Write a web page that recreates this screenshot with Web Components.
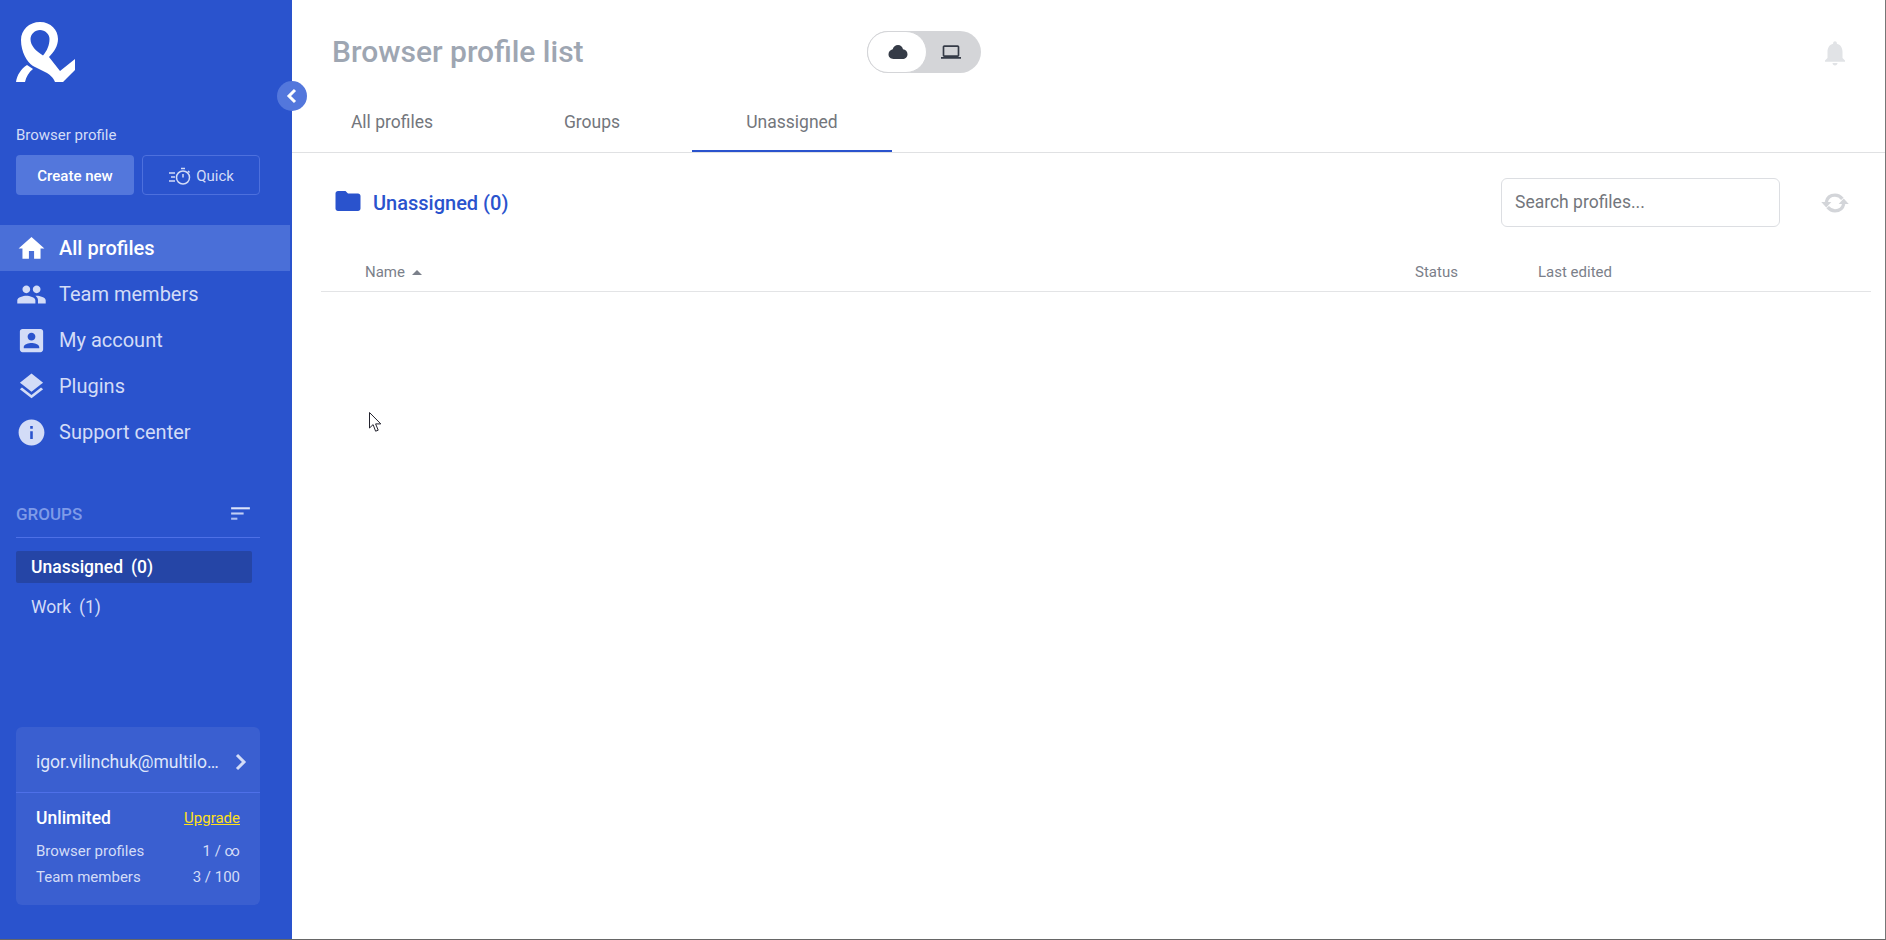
<!DOCTYPE html>
<html>
<head>
<meta charset="utf-8">
<title>Browser profile list</title>
<style>
  html, body { margin: 0; height: 100%; background: #fff; }
  body { font-family: Roboto, "Liberation Sans", sans-serif; overflow: hidden; }
</style>
</head>
<body>
<ml-app>
  <ml-sidebar slot="side">
    <ml-nav-item active label="All profiles" icon="home"></ml-nav-item>
    <ml-nav-item label="Team members" icon="people"></ml-nav-item>
    <ml-nav-item label="My account" icon="account"></ml-nav-item>
    <ml-nav-item label="Plugins" icon="layers"></ml-nav-item>
    <ml-nav-item label="Support center" icon="info"></ml-nav-item>
  </ml-sidebar>
  <ml-main slot="main"></ml-main>
</ml-app>

<script>
const ICONS = {
  home: "M10 20v-6h4v6h5v-8h3L12 3 2 12h3v8z",
  people: "M16 11c1.66 0 2.99-1.34 2.99-3S17.66 5 16 5c-1.66 0-3 1.34-3 3s1.34 3 3 3zm-8 0c1.66 0 2.99-1.34 2.99-3S9.66 5 8 5C6.34 5 5 6.34 5 8s1.34 3 3 3zm0 2c-2.33 0-7 1.17-7 3.5V19h14v-2.5c0-2.33-4.67-3.5-7-3.5zm8 0c-.29 0-.62.02-.97.05 1.16.84 1.97 1.97 1.97 3.45V19h6v-2.5c0-2.33-4.67-3.5-7-3.5z",
  account: "M3 5v14c0 1.1.89 2 2 2h14c1.1 0 2-.9 2-2V5c0-1.1-.9-2-2-2H5c-1.11 0-2 .9-2 2zm12 4c0 1.66-1.34 3-3 3s-3-1.34-3-3 1.34-3 3-3 3 1.34 3 3zm-9 8c0-2 4-3.1 6-3.1s6 1.1 6 3.1v1H6v-1z",
  layers: "M11.99 18.54l-7.37-5.73L3 14.07l9 7 9-7-1.63-1.27-7.38 5.74zM12 16l7.36-5.73L21 9l-9-7-9 7 1.63 1.27L12 16z",
  info: "M12 2C6.48 2 2 6.48 2 12s4.48 10 10 10 10-4.48 10-10S17.52 2 12 2zm1 15h-2v-6h2v6zm0-8h-2V7h2v2z"
};

class MlApp extends HTMLElement {
  constructor() {
    super();
    this.attachShadow({ mode: "open" });
    this.shadowRoot.innerHTML = `
      <style>
        :host {
          display: grid;
          grid-template-columns: 292px 1fr;
          height: 940px;
          box-sizing: border-box;
          border-right: 1px solid #777;
          border-bottom: 1px solid #666;
          position: relative;
        }
        .cursor { position: absolute; left: 369px; top: 412px; }
      </style>
      <slot name="side"></slot>
      <slot name="main"></slot>
      <svg class="cursor" width="14" height="21" viewBox="0 0 14 21">
        <path d="M.5.5v15.5l3.6-3.4 2.5 6.6 2.6-1-2.6-6.3h5.2z" fill="#fff" stroke="#23232e" stroke-width="1"/>
      </svg>
    `;
  }
}

class MlSidebar extends HTMLElement {
  constructor() {
    super();
    this.attachShadow({ mode: "open" });
    this.shadowRoot.innerHTML = `
      <style>
        :host {
          display: flex;
          flex-direction: column;
          background: #2a53cd;
          position: relative;
          height: 939px;
        }
        .logo { display: block; margin: 19px 0 0 13px; }
        .label { margin: 41px 0 0 16px; height: 18px; line-height: 18px; font-size: 15px; color: #d3dcf7; }
        .actions { display: flex; gap: 8px; margin: 11px 32px 0 16px; }
        .btn {
          width: 118px;
          height: 40px;
          box-sizing: border-box;
          border-radius: 4px;
          display: flex;
          align-items: center;
          justify-content: center;
          font-size: 15px;
        }
        .create { background: #5377dc; color: #fff; font-weight: 500; padding-top: 2px; }
        .quick { border: 1px solid #4d70dd; color: #d3dcf7; gap: 4px; padding-top: 1px; }
        nav { display: flex; flex-direction: column; margin-top: 30px; }
        .toggle {
          position: absolute;
          left: 277px;
          top: 81px;
          width: 30px;
          height: 30px;
          border-radius: 50%;
          background: #5377dc;
          display: flex;
          align-items: center;
          justify-content: center;
        }
        .groups-head {
          display: flex;
          align-items: center;
          justify-content: space-between;
          margin: 45px 32px 0 16px;
          height: 27px;
          padding: 0 7px 10px 0;
          border-bottom: 1px solid #4d70e6;
          font-size: 17px;
          font-weight: 500;
          color: #7f9be8;
        }
        .groups { display: flex; flex-direction: column; gap: 8px; margin: 13px 40px 0 16px; }
      </style>
      <svg class="logo" width="66" height="66" viewBox="13 19 66 66" fill="#fff">
        <path fill-rule="evenodd" d="M40 22C51 22 58 30 58 39C58 46 54 52 49 57L60 71L75 59V70L63 82H55C53 77 50 75 47 73L33 66C27 62 21 52 21 40C21 30 29 22 40 22ZM40 30C35 30 30.500 34 30.500 39C30.500 46 36 51 43 55.500C47 51 49.500 45 49.500 39C49.500 34 45 30 40 30Z"/>
        <path d="M16 82C17 75 21 69 27 65L33 69C29 72 26 77 25 82Z"/>
      </svg>
      <div class="label">Browser profile</div>
      <div class="actions">
        <div class="btn create">Create new</div>
        <div class="btn quick">
          <svg width="24" height="20" viewBox="0 0 24 20" fill="none" stroke="#d3dcf7" stroke-width="1.500">
            <circle cx="15" cy="11.500" r="6.500"/>
            <path d="M13 2.500h4M15 11.500V8M20 5l1.500 1.500M1 7h6M3 11h4M1 15h6"/>
          </svg>
          <span>Quick</span>
        </div>
      </div>
      <nav><slot></slot></nav>
      <div class="groups-head">
        <span>GROUPS</span>
        <svg width="25" height="25" viewBox="0 0 24 24">
          <rect x="3" y="6" width="18" height="2" fill="#dbe3fa"/>
          <rect x="3" y="11" width="12" height="2" fill="#c2cff5"/>
          <rect x="3" y="16" width="6" height="2" fill="#aebff2"/>
        </svg>
      </div>
      <div class="groups">
        <ml-group-item active name="Unassigned" count="(0)"></ml-group-item>
        <ml-group-item name="Work" count="(1)"></ml-group-item>
      </div>
      <ml-account-card></ml-account-card>
      <div class="toggle">
        <svg width="14" height="16" viewBox="0 0 14 16" fill="none" stroke="#fff" stroke-width="3">
          <path d="M10 2 4 8l6 6"/>
        </svg>
      </div>
    `;
  }
}

class MlNavItem extends HTMLElement {
  connectedCallback() {
    if (this.shadowRoot) return;
    this.attachShadow({ mode: "open" });
    const icon = ICONS[this.getAttribute("icon")];
    this.shadowRoot.innerHTML = `
      <style>
        :host {
          display: flex;
          align-items: center;
          height: 46px;
          margin-right: 2px;
          padding-left: 16px;
          gap: 12px;
          font-size: 20px;
          color: #d3dcf7;
          fill: #d3dcf7;
        }
        :host([active]) {
          background: #4a6fd8;
          color: #fff;
          fill: #fff;
          font-weight: 500;
        }
        svg { flex: none; }
      </style>
      <svg width="31" height="31" viewBox="0 0 24 24"><path d="${icon}"/></svg>
      <span>${this.getAttribute("label")}</span>
    `;
  }
}

class MlGroupItem extends HTMLElement {
  connectedCallback() {
    if (this.shadowRoot) return;
    this.attachShadow({ mode: "open" });
    this.shadowRoot.innerHTML = `
      <style>
        :host {
          display: flex;
          align-items: center;
          gap: 8px;
          height: 32px;
          padding-left: 15px;
          border-radius: 2px;
          font-size: 17.500px;
          color: #d3dcf7;
        }
        :host([active]) { background: #2545a6; color: #fff; font-weight: 500; }
      </style>
      <span>${this.getAttribute("name")}</span><span>${this.getAttribute("count")}</span>
    `;
  }
}

class MlAccountCard extends HTMLElement {
  constructor() {
    super();
    this.attachShadow({ mode: "open" });
    this.shadowRoot.innerHTML = `
      <style>
        :host {
          display: block;
          margin: auto 32px 34px 16px;
          background: #3a5fd0;
          border-radius: 6px;
          color: #d3dcf7;
        }
        .top {
          display: flex;
          align-items: center;
          justify-content: space-between;
          height: 66px;
          padding: 4px 13px 0 20px;
          box-sizing: border-box;
          border-bottom: 1px solid #4e70e8;
          font-size: 17.500px;
        }
        .mail { white-space: nowrap; color: #dfe6fb; }
        .bottom { padding: 13px 20px 15px 20px; }
        .plan { display: flex; align-items: center; justify-content: space-between; height: 24px; margin-bottom: 8px; }
        .name { font-size: 17.500px; font-weight: 500; color: #fff; }
        .upgrade { font-size: 15px; color: #ffe01a; text-decoration: underline; }
        .row { display: flex; justify-content: space-between; height: 26px; line-height: 26px; font-size: 15px; }
      </style>
      <div class="top">
        <span class="mail">igor.vilinchuk@multilo…</span>
        <svg width="12" height="18" viewBox="0 0 12 18" fill="none" stroke="#d3dcf7" stroke-width="3"><path d="M2 2l7 7-7 7"/></svg>
      </div>
      <div class="bottom">
        <div class="plan"><span class="name">Unlimited</span><span class="upgrade">Upgrade</span></div>
        <div class="row"><span>Browser profiles</span><span>1 / ∞</span></div>
        <div class="row"><span>Team members</span><span>3 / 100</span></div>
      </div>
    `;
  }
}

class MlMain extends HTMLElement {
  constructor() {
    super();
    this.attachShadow({ mode: "open" });
    this.shadowRoot.innerHTML = `
      <style>
        :host { display: block; min-width: 0; background: #fff; }
        .top { display: flex; align-items: center; height: 104px; padding: 0 35px 0 40px; box-sizing: border-box; }
        h1 { margin: 0; width: 535px; font-size: 30px; font-weight: 500; color: #9ea6b2; line-height: 38px; }
        .top .bell { margin-left: auto; position: relative; top: 1px; }
        .tabs { display: flex; height: 49px; box-sizing: border-box; border-bottom: 1px solid #e0e1e3; }
        .tab { width: 200px; display: flex; align-items: center; justify-content: center; font-size: 17.500px; color: #73767c; box-sizing: border-box; padding-bottom: 12px; }
        .tab.on { border-bottom: 2px solid #2a53cd; padding-bottom: 10px; }
        .bar { display: flex; align-items: center; height: 49px; margin: 25px 36px 0 42px; }
        .crumb { display: flex; align-items: center; gap: 10px; font-size: 20px; font-weight: 500; color: #2a53cd; }
        .crumb svg { margin: -3px 0 0 -1px; }
        .search {
          margin-left: auto;
          width: 279px;
          height: 49px;
          box-sizing: border-box;
          border: 1px solid #dcdee2;
          border-radius: 6px;
          display: flex;
          align-items: center;
          padding: 0 0 1px 13px;
          font-size: 17.500px;
          color: #73767c;
        }
        .sync { margin-left: 41px; }
        .thead {
          display: grid;
          grid-template-columns: 1050px 123px 1fr;
          height: 38px;
          margin: 26px 14px 0 29px;
          padding-left: 44px;
          border-bottom: 1px solid #e3e4e6;
          font-size: 15px;
          color: #7b808a;
          align-items: center;
        }
        .name { display: flex; align-items: center; gap: 7px; }
        .caret { width: 0; height: 0; border: 5px solid transparent; border-top: 0; border-bottom: 5px solid #7b808a; }
      </style>
      <div class="top">
        <h1>Browser profile list</h1>
        <ml-source-switch></ml-source-switch>
        <svg class="bell" width="30" height="30" viewBox="0 0 24 24" fill="#e1e3e6"><path d="M12 22c1.100 0 2-.9 2-2h-4c0 1.100.89 2 2 2zm6-6v-5c0-3.070-1.640-5.640-4.500-6.320V4c0-.83-.67-1.500-1.500-1.500s-1.500.67-1.500 1.500v.68C7.630 5.360 6 7.920 6 11v5l-2 2v1h16v-1l-2-2z"/></svg>
      </div>
      <div class="tabs">
        <div class="tab">All profiles</div>
        <div class="tab">Groups</div>
        <div class="tab on">Unassigned</div>
      </div>
      <div class="bar">
        <div class="crumb">
          <svg width="30" height="30" viewBox="0 0 24 24" fill="#2a53cd"><path d="M10 4H4c-1.100 0-1.990.9-1.990 2L2 18c0 1.100.9 2 2 2h16c1.100 0 2-.9 2-2V8c0-1.100-.9-2-2-2h-8l-2-2z"/></svg>
          <span>Unassigned (0)</span>
        </div>
        <div class="search"><span>Search profiles...</span></div>
        <svg class="sync" width="28" height="22" viewBox="0 0 30 24" fill="none" stroke="#d3d5d9" stroke-width="3.500">
          <path d="M5.500 11C6.500 6 10 3.500 15 3.500c3.500 0 6 1.500 8 4"/>
          <path d="M24.500 13C23.500 18 20 20.500 15 20.500c-3.500 0-6-1.500-8-4"/>
          <path d="M0 11h11l-5.500 6z" fill="#d3d5d9" stroke="none"/>
          <path d="M19 13h11l-5.500-6z" fill="#d3d5d9" stroke="none"/>
        </svg>
      </div>
      <div class="thead">
        <div class="name"><span>Name</span><span class="caret"></span></div>
        <div>Status</div>
        <div>Last edited</div>
      </div>
    `;
  }
}

class MlSourceSwitch extends HTMLElement {
  constructor() {
    super();
    this.attachShadow({ mode: "open" });
    this.shadowRoot.innerHTML = `
      <style>
        :host {
          display: flex;
          width: 114px;
          height: 42px;
          border-radius: 21px;
          background: #d4d5d8;
        }
        .opt { display: flex; align-items: center; justify-content: center; }
        .on { width: 60px; box-sizing: border-box; background: #fff; border: 1px solid #d4d5d8; border-radius: 21px; padding-left: 2px; }
        .off { flex: 1; padding-right: 6px; }
      </style>
      <div class="opt on">
        <svg width="20" height="16" viewBox="0 0 20 16" fill="#353b47"><path d="M10 1c2.600 0 4.500 1.800 5 4.200 2.500.3 4.500 2.300 4.500 5 0 2.800-2.200 4.800-5 4.800h-9C2.500 15 .5 13 .5 10.300c0-2.500 1.800-4.500 4.200-5C5.300 2.800 7.400 1 10 1z"/></svg>
      </div>
      <div class="opt off">
        <svg width="20" height="20" viewBox="0 0 24 24" fill="#353b47"><path d="M20 18c1.100 0 1.990-.9 1.990-2L22 6c0-1.100-.9-2-2-2H4c-1.100 0-2 .9-2 2v10c0 1.100.9 2 2 2H0v2h24v-2h-4zM4 6h16v10H4V6z"/></svg>
      </div>
    `;
  }
}

customElements.define("ml-app", MlApp);
customElements.define("ml-sidebar", MlSidebar);
customElements.define("ml-nav-item", MlNavItem);
customElements.define("ml-group-item", MlGroupItem);
customElements.define("ml-account-card", MlAccountCard);
customElements.define("ml-main", MlMain);
customElements.define("ml-source-switch", MlSourceSwitch);
</script>
</body>
</html>
